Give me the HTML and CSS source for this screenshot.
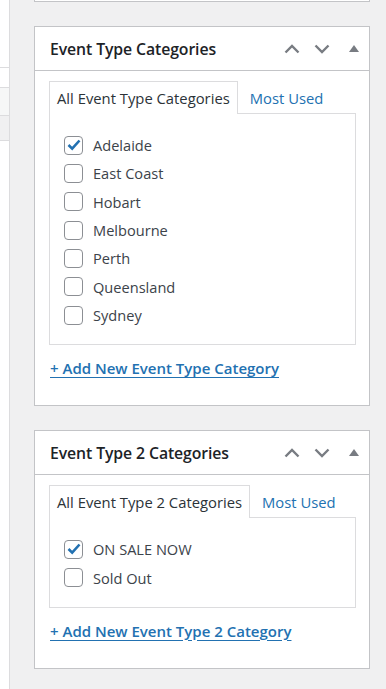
FILE: index.html
```html
<!DOCTYPE html>
<html lang="en">
<head>
  <meta charset="UTF-8">
  <meta name="viewport" content="width=device-width, initial-scale=1.0">
  <title>Event Type Categories</title>
  <link rel="stylesheet" href="styles.css">
</head>
<body>
  <div class="screen">
    <div class="edge">
      <div class="edge-a"></div>
      <div class="edge-b"></div>
      <div class="edge-c"></div>
      <div class="edge-gap"></div>
      <div class="edge-d"></div>
    </div>

    <div class="sidebar">
      <div class="postbox postbox-stub"></div>

      <div class="postbox">
        <div class="postbox-header">
          <h2>Event Type Categories</h2>
          <div class="handle-actions">
            <svg class="handle" width="16" height="10" viewBox="0 0 16 10"><path d="M1.5 8.5 L8 2 L14.5 8.5" fill="none" stroke="#787c82" stroke-width="2.4"/></svg>
            <svg class="handle" width="16" height="10" viewBox="0 0 16 10"><path d="M1.5 1.5 L8 8 L14.5 1.5" fill="none" stroke="#787c82" stroke-width="2.4"/></svg>
            <svg class="toggle" width="10" height="7" viewBox="0 0 10 7"><path d="M0 7 L5 0 L10 7 Z" fill="#787c82"/></svg>
          </div>
        </div>
        <div class="inside">
          <ul class="tabs">
            <li class="tab active">All Event Type Categories</li>
            <li class="tab"><a href="#">Most Used</a></li>
          </ul>
          <div class="panel">
            <label class="row"><span class="box checked"><svg width="14" height="12" viewBox="0 0 14 12"><path d="M1.5 6 L5.2 9.6 L12.5 1.5" fill="none" stroke="#2271b1" stroke-width="2.6"/></svg></span>Adelaide</label>
            <label class="row"><span class="box"></span>East Coast</label>
            <label class="row"><span class="box"></span>Hobart</label>
            <label class="row"><span class="box"></span>Melbourne</label>
            <label class="row"><span class="box"></span>Perth</label>
            <label class="row"><span class="box"></span>Queensland</label>
            <label class="row"><span class="box"></span>Sydney</label>
          </div>
          <a class="add-new" href="#">+ Add New Event Type Category</a>
        </div>
      </div>

      <div class="postbox">
        <div class="postbox-header">
          <h2>Event Type 2 Categories</h2>
          <div class="handle-actions">
            <svg class="handle" width="16" height="10" viewBox="0 0 16 10"><path d="M1.5 8.5 L8 2 L14.5 8.5" fill="none" stroke="#787c82" stroke-width="2.4"/></svg>
            <svg class="handle" width="16" height="10" viewBox="0 0 16 10"><path d="M1.5 1.5 L8 8 L14.5 1.5" fill="none" stroke="#787c82" stroke-width="2.4"/></svg>
            <svg class="toggle" width="10" height="7" viewBox="0 0 10 7"><path d="M0 7 L5 0 L10 7 Z" fill="#787c82"/></svg>
          </div>
        </div>
        <div class="inside">
          <ul class="tabs">
            <li class="tab active">All Event Type 2 Categories</li>
            <li class="tab"><a href="#">Most Used</a></li>
          </ul>
          <div class="panel">
            <label class="row"><span class="box checked"><svg width="14" height="12" viewBox="0 0 14 12"><path d="M1.5 6 L5.2 9.6 L12.5 1.5" fill="none" stroke="#2271b1" stroke-width="2.6"/></svg></span>ON SALE NOW</label>
            <label class="row"><span class="box"></span>Sold Out</label>
          </div>
          <a class="add-new" href="#">+ Add New Event Type 2 Category</a>
        </div>
      </div>
    </div>
  </div>
</body>
</html>
```

FILE: styles.css
```css
body {
  margin: 0; background: #f0f0f1; font-family: "Open Sans", Arial, sans-serif;
  color: #3c434a; height: 689px; overflow: hidden; }
.screen {
  display: flex; height: 689px; }
.edge {
  width: 9px; border-right: 1px solid #dcdcde; display: flex; flex-direction: column; }
.edge-a { height: 67px; background: #fff; border-bottom: 1px solid #dcdcde; }
.edge-b { height: 19px; background: #fff; border-bottom: 1px solid #dcdcde; }
.edge-c { height: 27px; background: #f6f7f7; border-bottom: 1px solid #dcdcde; }
.edge-gap { height: 24px; }
.edge-d { flex: 1; background: #fff; border-top: 1px solid #dcdcde; }

.sidebar {
  margin-left: 24px; width: 336px; }
.postbox {
  background: #fff; border: 1px solid #c3c4c7; margin-bottom: 24px; box-sizing: border-box; }
.postbox-stub {
  height: 2px; border-top: none; }
.postbox-header {
  height: 43px; border-bottom: 1px solid #c3c4c7; display: flex; align-items: center;
  justify-content: space-between; padding: 0 10px 0 15px; }
.postbox-header h2 {
  margin: 0; font-size: 15.8px; font-weight: 600; color: #1d2327; letter-spacing: -0.1px; }
.handle-actions {
  display: flex; align-items: center; }
.handle { margin-left: 14px; }
.toggle { margin-left: 19px; margin-bottom: 1px; }

.inside {
  padding: 10px 14px 0 14px; }
.tabs {
  list-style: none; margin: 0; padding: 0; display: flex; }
.tab {
  font-size: 14.8px; height: 31px; line-height: 33px; padding: 0 7px; border: 1px solid transparent;
  border-bottom: none; }
.tab.active {
  background: #fff; border-color: #dcdcde; color: #2c3338; position: relative; z-index: 1;
  height: 32px; margin-bottom: -1px; }
.tab a {
  color: #2271b1; text-decoration: none; padding-left: 4px; }
.panel {
  border: 1px solid #dcdcde; padding: 17px 0 15px 14px; width: 291px; }
.row {
  display: flex; align-items: center; height: 28.33px; font-size: 14.6px; color: #3c434a; }
.box {
  width: 17px; height: 17px; border: 1px solid #8c8f94; border-radius: 4px; margin-right: 10px;
  display: flex; align-items: center; justify-content: center; box-sizing: content-box; }
.add-new {
  display: inline-block; margin: 13px 0 27px 1px; font-size: 15px; font-weight: 600; color: #2271b1;
  text-decoration: underline; text-underline-offset: 3px; line-height: 20px; }
```
